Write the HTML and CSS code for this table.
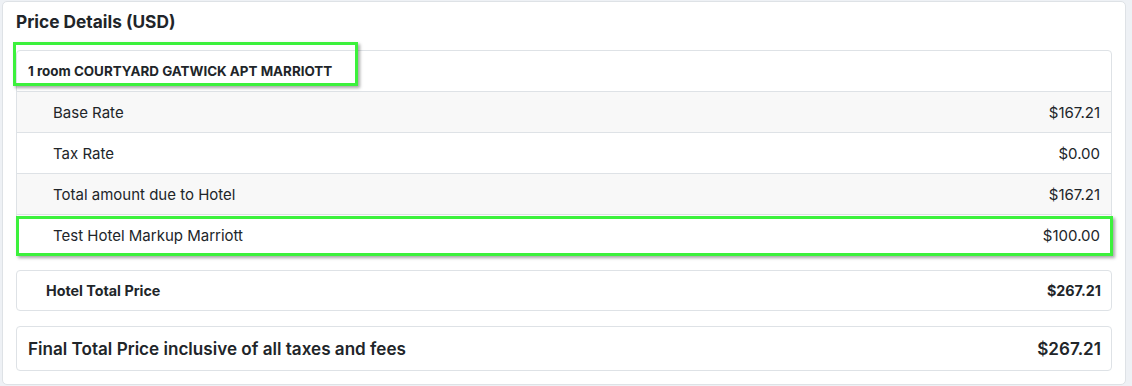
FILE: index.html
```html
<!DOCTYPE html>
<html>
<head>
<meta charset="utf-8">
<link rel="stylesheet" href="styles.css">
</head>
<body>
<div class="card">
  <h2 class="title">Price Details (USD)</h2>
  <div class="table">
    <div class="row head"><span>1 room COURTYARD GATWICK APT MARRIOTT</span></div>
    <div class="row item striped"><span>Base Rate</span><span>$167.21</span></div>
    <div class="row item"><span>Tax Rate</span><span>$0.00</span></div>
    <div class="row item striped"><span>Total amount due to Hotel</span><span>$167.21</span></div>
    <div class="row item last"><span>Test Hotel Markup Marriott</span><span>$100.00</span></div>
  </div>
  <div class="box hotel"><span>Hotel Total Price</span><span>$267.21</span></div>
  <div class="box final"><span>Final Total Price inclusive of all taxes and fees</span><span>$267.21</span></div>
  <div class="mark mark-head"></div>
  <div class="mark mark-row"></div>
</div>
</body>
</html>
```
FILE: styles.css
```css
html, body {
  margin: 0;
  padding: 0;
}
body {
  background: #eef1f5;
  padding: 1px 6px 2px 2px;
  font-family: Inter, "Liberation Sans", sans-serif;
  color: #212529;
  height: 386px;
  box-sizing: border-box;
}
.card {
  position: relative;
  background: #fff;
  border: 1px solid #dee2e6;
  border-radius: 5px;
  padding: 8px 13px 13px 13px;
}
.title {
  margin: 0 0 16px 0;
  font-size: 17.3px;
  font-weight: 700;
  line-height: 24px;
}
.table {
  border: 1px solid #dee2e6;
  border-radius: 4px;
  overflow: hidden;
}
.row {
  display: flex;
  justify-content: space-between;
  align-items: center;
  height: 40px;
  border-bottom: 1px solid #dee2e6;
}
.row.last {
  border-bottom: 0;
}
.head {
  font-size: 13.4px;
  font-weight: 700;
  padding: 0 11px;
}
.item {
  font-size: 15px;
  padding: 0 11px 0 36px;
}
.striped {
  background: #f8f8f8;
}
.box {
  display: flex;
  justify-content: space-between;
  align-items: center;
  border: 1px solid #dee2e6;
  border-radius: 4px;
}
.hotel {
  margin-top: 14px;
  height: 39px;
  font-size: 14.3px;
  font-weight: 700;
  padding: 0 10px 0 29px;
}
.final {
  margin-top: 15px;
  height: 43px;
  font-size: 17.1px;
  font-weight: 600;
  padding: 0 10px 0 11px;
}
.mark {
  position: absolute;
  border: 3px solid #3cf13c;
  box-shadow: 2px 2px 3px rgba(0, 0, 0, 0.35);
}
.mark-head {
  left: 10px;
  top: 40px;
  width: 339px;
  height: 38px;
}
.mark-row {
  left: 13px;
  top: 214px;
  width: 1091px;
  height: 34px;
}
```
